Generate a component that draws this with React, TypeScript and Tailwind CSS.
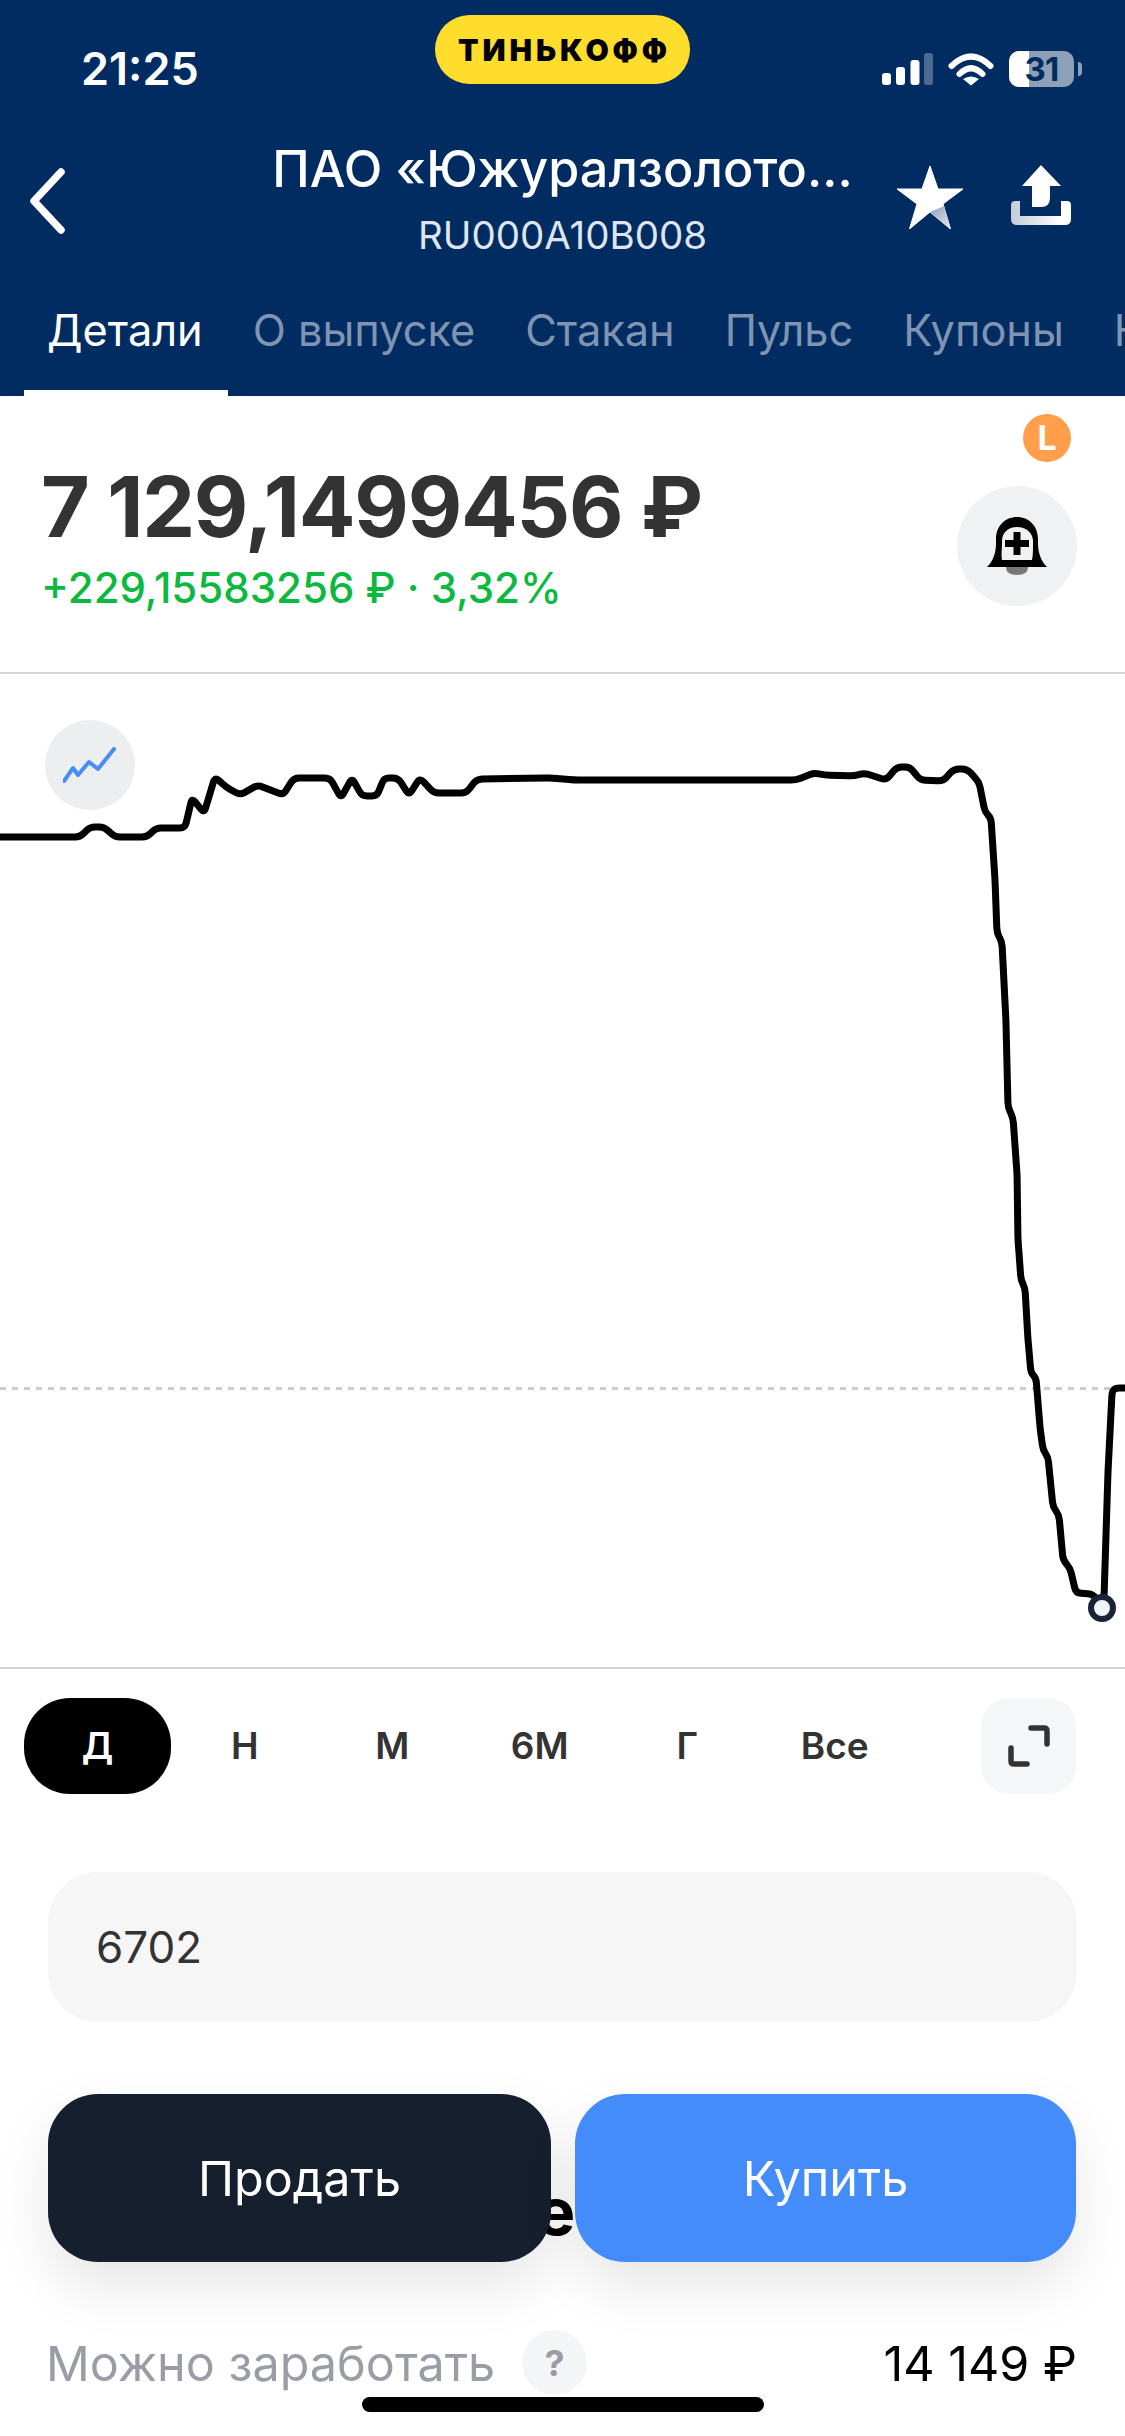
const pts: [number, number][] = [
  [-5,837],[80,837],[90,827],[104,827],[115,837],[147,837],[156,828],[185,828],[192,798],[204,813],[215,777],[226,787],[240,795],[258,785],[283,795],[294,778],[330,778],[341,798],[352,778],[362,796],[377,796],[384,778],[398,778],[409,795],[420,778],[434,793],[466,793],[477,779],[552,778],[574,780],[796,780],[814,773],[825,775],[854,776],[864,773],[886,780],[897,767],[910,767],[920,780],[943,781],[954,769],[967,769],[979,782],[985,812],[991,818],[995,880],[997,933],[1002,942],[1006,1023],[1008,1107],[1013,1118],[1017,1173],[1018,1240],[1021,1280],[1025,1288],[1028,1340],[1031,1373],[1036,1378],[1040,1427],[1043,1450],[1048,1457],[1053,1507],[1059,1515],[1063,1560],[1070,1568],[1076,1593],[1093,1594],[1102,1608],[1104,1597],[1108,1473],[1112,1392],[1115,1388],[1130,1388],
];

function smoothPath(p: [number, number][], r = 5) {
  let d = `M${p[0][0]} ${p[0][1]}`;
  for (let i = 1; i < p.length - 1; i++) {
    const [x0, y0] = p[i - 1];
    const [x1, y1] = p[i];
    const [x2, y2] = p[i + 1];
    const l1 = Math.hypot(x1 - x0, y1 - y0);
    const l2 = Math.hypot(x2 - x1, y2 - y1);
    const a = Math.min(r, l1 / 2);
    const b = Math.min(r, l2 / 2);
    d += ` L${(x1 - ((x1 - x0) / l1) * a).toFixed(1)} ${(y1 - ((y1 - y0) / l1) * a).toFixed(1)}`;
    d += ` Q${x1} ${y1} ${(x1 + ((x2 - x1) / l2) * b).toFixed(1)} ${(y1 + ((y2 - y1) / l2) * b).toFixed(1)}`;
  }
  const e = p[p.length - 1];
  return d + ` L${e[0]} ${e[1]}`;
}

const tabs = ["О выпуске", "Стакан", "Пульс", "Купоны", "Новости"];
const ranges = ["Н", "М", "6М", "Г", "Все"];

export default function App() {
  return (
    <div className="relative h-[2436px] w-[1125px] overflow-hidden bg-white font-['Inter',sans-serif] text-[#333333]">
      <header className="flex h-[396px] flex-col bg-[#012c61] text-white">
        <div className="grid h-[100px] grid-cols-[1fr_auto_1fr]">
          <div className="mt-[47px] pl-[81px] text-[45px] leading-[44px] font-semibold">21:25</div>
          <div className="mt-[15px] flex h-[69px] w-[255px] items-center justify-center rounded-full bg-[#ffdd2d] pl-[4px] text-[30px] leading-none font-black tracking-[0.13em] text-black">
            ТИНЬКОФФ
          </div>
          <div className="mt-[51px] flex h-[36px] items-center justify-end pr-[43px]">
            <svg width="112" height="36" viewBox="882 51 112 36" className="shrink-0">
              <rect x="882" y="73" width="9" height="12" rx="3" fill="#fff" />
              <rect x="896" y="67" width="9" height="18" rx="3" fill="#fff" />
              <rect x="910.5" y="60" width="9" height="25" rx="3" fill="#fff" />
              <rect x="924" y="53" width="9" height="32" rx="3" fill="#fff" fillOpacity="0.3" />
              <path d="M951.5 66 Q971 47 990.5 66" fill="none" stroke="#fff" strokeWidth="6" strokeLinecap="round" />
              <path d="M959.5 74 Q971 62.5 982.5 74" fill="none" stroke="#fff" strokeWidth="6" strokeLinecap="round" />
              <path d="M963 79 Q971 74 979 79 L971 85.5 Z" fill="#fff" />
            </svg>
            <div className="relative ml-[15px] flex h-[36px] w-[65px] shrink-0 items-center justify-center overflow-hidden rounded-[10px] bg-white/55">
              <div className="absolute inset-y-0 left-0 w-[20px] bg-white" />
              <span className="relative text-[33px] leading-none font-bold tracking-[-0.02em] text-[#012c61]">31</span>
            </div>
            <div className="ml-[4px] h-[14px] w-[4px] shrink-0 rounded-r-full bg-white/55" />
          </div>
        </div>

        <div className="grid h-[180px] grid-cols-[1fr_auto_1fr] pt-[39px]">
          <div className="pt-[29px] pl-[27px]">
            <svg width="42" height="66" viewBox="0 0 42 66" fill="none">
              <path d="M34 4 L7 33 L34 62" stroke="#fff" strokeWidth="7.5" strokeLinecap="round" strokeLinejoin="round" />
            </svg>
          </div>
          <div className="flex flex-col items-center">
            <div className="text-[50.3px] leading-[60px] font-medium whitespace-nowrap">ПАО «Южуралзолото...</div>
            <div className="mt-[13px] text-[38.5px] leading-[46px] text-[#dfe5ee]">RU000A10B008</div>
          </div>
          <div className="flex items-start justify-end gap-[48px] pr-[54px]">
            <svg className="mt-[27px]" width="66" height="63" viewBox="897 166 66 63">
              <defs>
                <linearGradient id="starShade" x1="0" y1="0" x2="1" y2="1">
                  <stop offset="0" stopColor="#8d9db5" />
                  <stop offset="1" stopColor="#e6eaf0" />
                </linearGradient>
              </defs>
              <path d="M930 166 L938 189 L963 189 L943 204 L950.5 229 L930 212 L909.5 229 L917 204 L897 189 L922 189 Z" fill="#fff" stroke="#fff" strokeWidth="1" strokeLinejoin="round" />
              <path d="M930 212 L950.5 229 L944 206 Z" fill="url(#starShade)" />
            </svg>
            <svg className="mt-[26px]" width="60" height="60" viewBox="1011 165 60 60">
              <defs>
                <linearGradient id="trayShade" x1="0" y1="0" x2="1" y2="0">
                  <stop offset="0" stopColor="#c3ccda" />
                  <stop offset="0.85" stopColor="#ffffff" />
                </linearGradient>
              </defs>
              <path d="M1011 205 Q1011 201 1015 201 L1020 201 L1020 216 L1061 216 L1061 201 L1067 201 Q1071 201 1071 205 L1071 219 Q1071 225 1065 225 L1017 225 Q1011 225 1011 219 Z" fill="url(#trayShade)" />
              <path d="M1041 165 L1061 186 L1050 186 L1050 198 Q1050 207 1041 207 L1032 207 L1032 186 L1022 186 Z" fill="#fff" />
            </svg>
          </div>
        </div>

        <nav className="flex h-[116px] gap-[50px] overflow-hidden pt-[25px] pl-[47px] text-[43.3px] leading-[50px] whitespace-nowrap text-[#7f94b2]">
          <div className="relative h-[91px] text-white">
            Детали
            <span className="absolute -right-[25px] bottom-0 -left-[23px] h-[6px] bg-white" />
          </div>
          {tabs.map((t) => (
            <div key={t}>{t}</div>
          ))}
        </nav>
      </header>

      <section className="flex h-[278px] justify-between border-b-2 border-[#d4d4d4]">
        <div className="pt-[61px] pl-[41px]">
          <div className="text-[84px] leading-[100px] font-bold tracking-[-0.015em] whitespace-nowrap">7 129,1499456 ₽</div>
          <div className="mt-[7px] text-[42px] leading-[48px] font-medium text-[#0cb83f]">+229,15583256 ₽ · 3,32%</div>
        </div>
        <div className="flex flex-col items-end pt-[18px] pr-[48px]">
          <div className="mr-[6px] flex h-[48px] w-[48px] items-center justify-center rounded-full bg-[#ff9f4c] text-[34px] leading-none font-bold text-white">
            L
          </div>
          <div className="mt-[24px] flex h-[120px] w-[120px] items-start justify-center rounded-full bg-[#eff1f2] pt-[31px]">
            <svg width="60" height="58" viewBox="0 0 60 58">
              <path d="M19 50 H41 Q41 58 30 58 Q19 58 19 50 Z" fill="#777" />
              <path fillRule="evenodd" d="M0 50 C6 44 9 36 9 26 V22 C9 9 18 0 30 0 C42 0 51 9 51 22 V26 C51 36 54 44 60 50 Z M15 43 H45 C46 38 46 33 46 26 V24 C46 16 39 10 30 10 C21 10 15 16 15 24 V26 C15 33 14 38 15 43 Z" fill="#000" />
              <path d="M26.5 15 H33.5 V23 H42 V30 H33.5 V38 H26.5 V30 H18 V23 H26.5 Z" fill="#000" />
            </svg>
          </div>
        </div>
      </section>

      <section className="relative h-[995px] border-b-2 border-[#d4d4d4]">
        <div className="absolute top-[46px] left-[45px] flex h-[90px] w-[90px] items-center justify-center rounded-full bg-[#eceef0]">
          <svg width="54" height="36" viewBox="62 745 54 36" fill="none">
            <path d="M63 779 L72 766 L77 773 L88 760 L97 767 L113 747" stroke="#4a8cf5" strokeWidth="4" strokeLinejoin="round" strokeLinecap="round" />
          </svg>
        </div>
        <svg className="block" width="1125" height="993" viewBox="0 674 1125 993" fill="none">
          <line x1="0" y1="1388.5" x2="1112" y2="1388.5" stroke="#cccccc" strokeWidth="3" strokeDasharray="6 6" />
          <path d={smoothPath(pts)} stroke="#000" strokeWidth="7" strokeLinejoin="round" strokeLinecap="round" />
          <circle cx="1102" cy="1608" r="11" fill="#f1f5f9" stroke="#1a2336" strokeWidth="6" />
        </svg>
      </section>

      <div className="flex items-center px-[24px] pt-[29px]">
        <div className="flex h-[96px] w-[147px] items-center justify-center rounded-[46px] bg-black text-[37px] font-semibold text-white">Д</div>
        {ranges.map((r) => (
          <div key={r} className="flex h-[96px] w-[147.5px] items-center justify-center text-[37px] font-semibold">
            {r}
          </div>
        ))}
        <div className="ml-auto mr-[25px] flex h-[96px] w-[95px] items-center justify-center rounded-[28px] bg-[#f5f6f7]">
          <svg width="42" height="42" viewBox="0 0 42 42" fill="none">
            <path d="M23 3 H36 Q39 3 39 6 V19" stroke="#333" strokeWidth="5.5" strokeLinecap="round" />
            <path d="M19 39 H6 Q3 39 3 36 V23" stroke="#333" strokeWidth="5.5" strokeLinecap="round" />
          </svg>
        </div>
      </div>

      <div className="mx-[48px] mt-[78px] flex h-[150px] items-center rounded-[50px] bg-[#f6f6f6] pl-[48px] text-[44px]">6702</div>

      <h2 className="mt-[149px] pl-[536px] text-[66px] leading-[80px] font-bold text-black">е</h2>

      <div className="mt-[79px] flex h-[65px] items-center justify-between pr-[48px] pl-[46px]">
        <div className="flex items-center gap-[27px]">
          <span className="pt-[4px] text-[48.5px] leading-none text-[#9a9da6]">Можно заработать</span>
          <span className="flex h-[65px] w-[65px] items-center justify-center rounded-full bg-[#f4f5f6] text-[36px] font-bold text-[#9a9da6]">?</span>
        </div>
        <span className="pt-[4px] text-[48.5px] leading-none text-black">14 149 ₽</span>
      </div>

      <div className="absolute right-[49px] bottom-[174px] left-[48px] flex h-[168px] gap-[24px]">
        <button className="flex w-[503px] items-center justify-center rounded-[50px] bg-[#161f2e] pt-[2px] text-[48.5px] text-white shadow-[0_24px_56px_rgba(0,0,0,0.1)]">
          Продать
        </button>
        <button className="flex flex-1 items-center justify-center rounded-[50px] bg-[#458cfb] pt-[2px] text-[48.5px] text-white shadow-[0_24px_56px_rgba(0,0,0,0.1)]">
          Купить
        </button>
      </div>

      <div className="absolute bottom-[24px] left-[362px] h-[15px] w-[402px] rounded-full bg-black" />
    </div>
  );
}
